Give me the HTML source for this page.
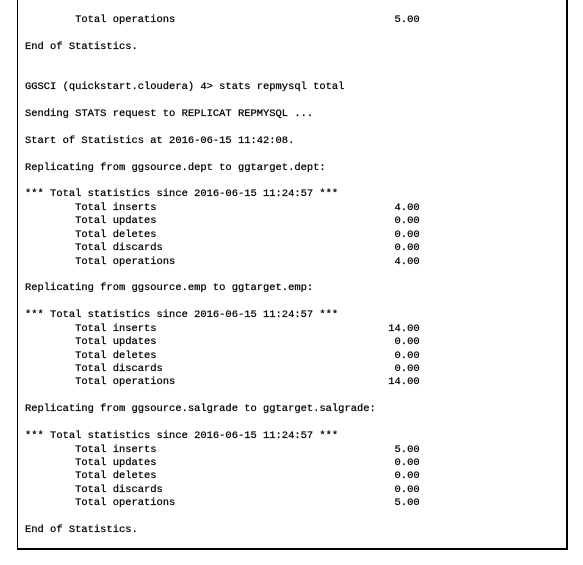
<!DOCTYPE html>
<html><head><style>
html,body{margin:0;padding:0;background:#fff;width:583px;height:565px;overflow:hidden}
.box{position:absolute;left:17px;top:-5px;width:548px;height:553px;border-left:1px solid #000;border-right:2px solid #000;border-bottom:2px solid #000}
pre{position:absolute;left:25px;top:14px;margin:0;font-family:"Liberation Mono",monospace;font-size:10.45px;line-height:13.42px;color:#000;-webkit-text-stroke:0.25px #000}
</style></head><body>
<div class="box"></div>
<pre>        Total operations                                   5.00

End of Statistics.


GGSCI (quickstart.cloudera) 4&gt; stats repmysql total

Sending STATS request to REPLICAT REPMYSQL ...

Start of Statistics at 2016-06-15 11:42:08.

Replicating from ggsource.dept to ggtarget.dept:

*** Total statistics since 2016-06-15 11:24:57 ***
        Total inserts                                      4.00
        Total updates                                      0.00
        Total deletes                                      0.00
        Total discards                                     0.00
        Total operations                                   4.00

Replicating from ggsource.emp to ggtarget.emp:

*** Total statistics since 2016-06-15 11:24:57 ***
        Total inserts                                     14.00
        Total updates                                      0.00
        Total deletes                                      0.00
        Total discards                                     0.00
        Total operations                                  14.00

Replicating from ggsource.salgrade to ggtarget.salgrade:

*** Total statistics since 2016-06-15 11:24:57 ***
        Total inserts                                      5.00
        Total updates                                      0.00
        Total deletes                                      0.00
        Total discards                                     0.00
        Total operations                                   5.00

End of Statistics.</pre>
</body></html>
